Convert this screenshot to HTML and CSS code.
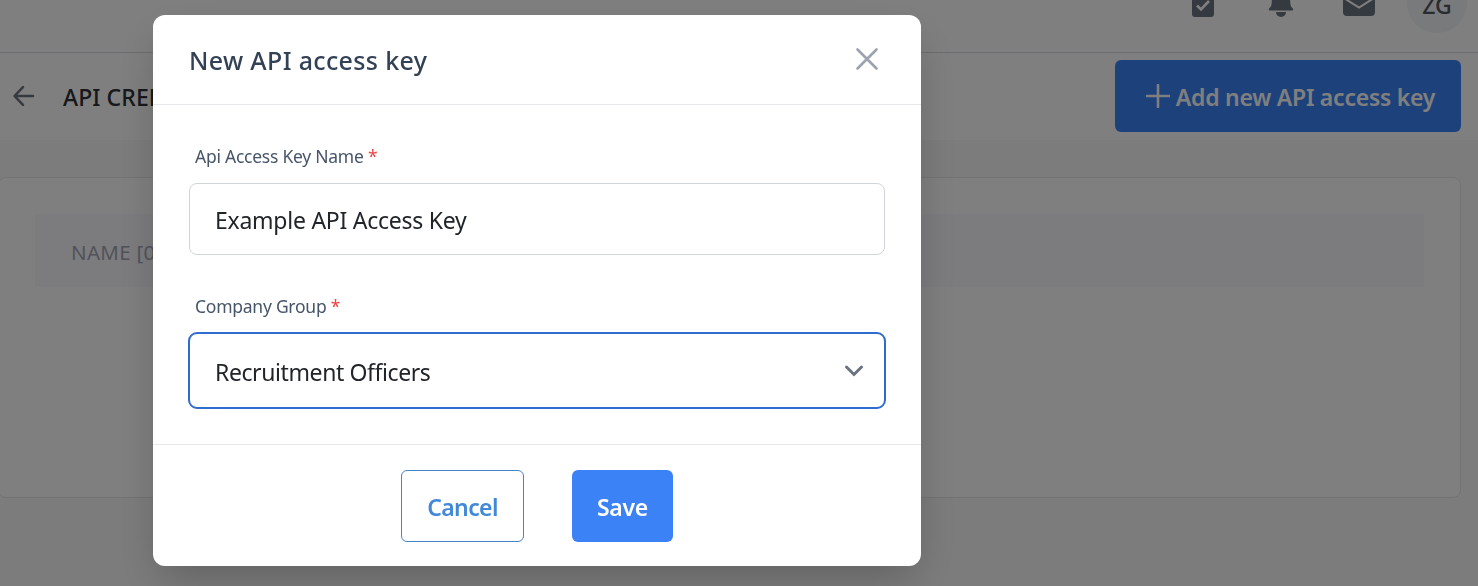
FILE: index.html
```html
<!DOCTYPE html>
<html lang="en">
<head>
    <meta charset="UTF-8">
    <meta name="viewport" content="width=device-width, initial-scale=1.0">
    <title>API Credentials</title>
    <link rel="stylesheet" href="styles.css">
</head>
<body>
    <div class="page">
        <header class="topbar">
            <svg class="icon-tasks" width="24" height="26" viewBox="0 0 24 26">
                <rect x="1" y="1" width="22" height="24" rx="3" fill="#6b7280"/>
                <path d="M6 13.500l4 4 8-8.500" fill="none" stroke="#fff" stroke-width="2.600"/>
            </svg>
            <svg class="icon-bell" width="26" height="30" viewBox="0 0 26 30">
                <path d="M13 1a2 2 0 0 1 2 2v1c4 1 7.200 4 7.200 8.500 0 5 .8 6.500 2.500 7.800.8 1 .4 2.200-.8 2.200H2.100c-1.200 0-1.600-1.200-.8-2.200 1.700-1.300 2.500-2.800 2.500-7.800C3.800 8 7 5 11 4V3a2 2 0 0 1 2-2z"/>
                <path d="M8 24h10a5 5 0 0 1-10 0z"/>
            </svg>
            <svg class="icon-mail" width="32" height="26" viewBox="0 0 32 26">
                <rect width="32" height="26" rx="4" fill="#6b7280"/>
                <path d="M0 7.500l16 10 16-10" fill="none" stroke="#fff" stroke-width="2"/>
            </svg>
            <div class="avatar">ZG</div>
        </header>
        <div class="title-bar">
            <svg class="back" width="24" height="24" viewBox="0 0 24 24">
                <path d="M21 12H3M11 3.200L2.500 12l8.500 8.800"/>
            </svg>
            <h1>API CREDENTIALS</h1>
            <button class="button button-add">
                <svg width="24" height="24" viewBox="0 0 24 24"><path d="M12 1v22M1 12h22"/></svg>
                <span>Add new API access key</span>
            </button>
        </div>
        <main class="card">
            <div class="table-head">NAME [0]</div>
        </main>
    </div>

    <div class="overlay">
        <div class="modal">
            <div class="modal-header">
                <h2>New API access key</h2>
                <svg class="close" width="24" height="24" viewBox="0 0 24 24"><path d="M2.500 2.500l19 19M21.500 2.500l-19 19"/></svg>
            </div>
            <div class="modal-body">
                <label for="key-name">Api Access Key Name <span class="required">*</span></label>
                <input class="field" type="text" id="key-name" value="Example API Access Key">
                <label for="group">Company Group <span class="required">*</span></label>
                <div class="field field-select" id="group">
                    <span>Recruitment Officers</span>
                    <svg width="20" height="14" viewBox="0 0 20 14"><path d="M2.500 3L10 10.500 17.500 3"/></svg>
                </div>
            </div>
            <div class="modal-footer">
                <button class="button button-cancel">Cancel</button>
                <button class="button button-save">Save</button>
            </div>
        </div>
    </div>
</body>
</html>
```
FILE: styles.css
```css
* {
    box-sizing: border-box;
}
body {
    font-family: 'Segoe UI', 'Noto Sans', sans-serif;
    background-color: #f9f9fa;
    margin: 0;
    height: 586px;
    overflow: hidden;
}
h1, h2 {
    margin: 0;
    font-weight: 500;
}
.topbar {
    display: flex;
    justify-content: flex-end;
    align-items: flex-end;
    height: 53px;
    padding-right: 11px;
    background: #fff;
    border-bottom: 1px solid #d9d9e0;
    fill: #6b7280;
}
.icon-tasks {
    margin: 0 53px 34px 0;
}
.icon-bell {
    margin: 0 49px 34px 0;
}
.icon-mail {
    margin: 0 32px 36px 0;
}
.avatar {
    display: flex;
    align-items: center;
    justify-content: center;
    flex: none;
    width: 60px;
    height: 60px;
    margin-bottom: 19px;
    padding-top: 3px;
    border-radius: 50%;
    background: #f1f5f9;
    color: #52565e;
    font-size: 23px;
    line-height: 24px;
    font-weight: 500;
}
.title-bar {
    display: flex;
    align-items: center;
    height: 87px;
    padding: 0 17px 2px 12px;
    background: #fff;
}
.title-bar h1 {
    margin-left: 27px;
    color: #2d3138;
    font-size: 23px;
    letter-spacing: 0.1px;
    line-height: 34px;
    padding-top: 3px;
}
.back {
    fill: none;
    stroke: #6b7280;
    stroke-width: 2.5;
    stroke-linecap: round;
    stroke-linejoin: round;
}
.button {
    height: 72px;
    padding: 2px 0 0;
    border: none;
    border-radius: 6px;
    background-color: #3b82f6;
    color: #fff;
    font-family: inherit;
    font-size: 23px;
    font-weight: 600;
    letter-spacing: -0.3px;
}
.button-add {
    display: flex;
    align-items: center;
    justify-content: center;
    gap: 6px;
    width: 346px;
    margin-left: auto;
    padding-left: 5px;
    white-space: nowrap;
    letter-spacing: -0.25px;
}
.button-add svg {
    margin-top: -2px;
    stroke: #fff;
    stroke-width: 2.6;
    stroke-linecap: round;
}
.card {
    width: 1463px;
    height: 321px;
    margin: 37px 0 0 -2px;
    padding: 36px;
    background: #fff;
    border: 1px solid #e5e7eb;
    border-radius: 8px;
}
.table-head {
    height: 73px;
    padding: 4px 0 0 36px;
    background: #f8f8ff;
    color: #a3a7b0;
    font-size: 20.5px;
    line-height: 68px;
    letter-spacing: 0.3px;
}
/* modal */
.overlay {
    position: fixed;
    inset: 0;
    padding: 15px 0 0 153px;
    background: rgba(0, 0, 0, 0.5);
}
.modal {
    width: 768px;
    height: 551px;
    background: #fff;
    border-radius: 12px;
    box-shadow: 0 18px 44px -6px rgba(0, 0, 0, 0.22);
}
.modal-header {
    display: flex;
    align-items: center;
    justify-content: space-between;
    height: 90px;
    padding: 0 42px 2px 36px;
    border-bottom: 1px solid #e5e7eb;
}
.modal-header h2 {
    padding-top: 2px;
    color: #334155;
    font-size: 25px;
    letter-spacing: 0.35px;
}
.close {
    stroke: #9ca3af;
    stroke-width: 2.6;
    stroke-linecap: round;
}
.modal-body {
    height: 340px;
    padding: 36px 35px 0;
    border-bottom: 1px solid #e5e7eb;
}
.modal-body label {
    display: block;
    height: 32px;
    padding-left: 7px;
    color: #475569;
    font-size: 17.5px;
    line-height: 30px;
    letter-spacing: -0.25px;
}
.required {
    color: #ef4444;
}
.field {
    display: block;
    width: 696px;
    height: 72px;
    margin: 10px 1px 36px;
    padding: 1px 25px 0;
    border: 1px solid #d1d5db;
    border-radius: 8px;
    background: #fff;
    color: #212529;
    font-family: inherit;
    font-size: 23px;
    letter-spacing: -0.25px;
}
.field-select {
    display: flex;
    align-items: center;
    justify-content: space-between;
    width: 698px;
    height: 77px;
    margin: 9px 0 0;
    padding: 3px 20px 0 25px;
    border: 2px solid #2f6cd0;
    border-radius: 9px;
    letter-spacing: -0.4px;
}
.field-select svg {
    margin-top: -3px;
    fill: none;
    stroke: #6b7280;
    stroke-width: 3;
    stroke-linecap: round;
}
.modal-footer {
    display: flex;
    justify-content: center;
    gap: 48px;
    padding-top: 25px;
}
.button-cancel {
    width: 123px;
    background: #fff;
    border: 1px solid #4484c8;
    color: #4189d8;
    letter-spacing: -0.6px;
}
.button-save {
    width: 101px;
}
```
